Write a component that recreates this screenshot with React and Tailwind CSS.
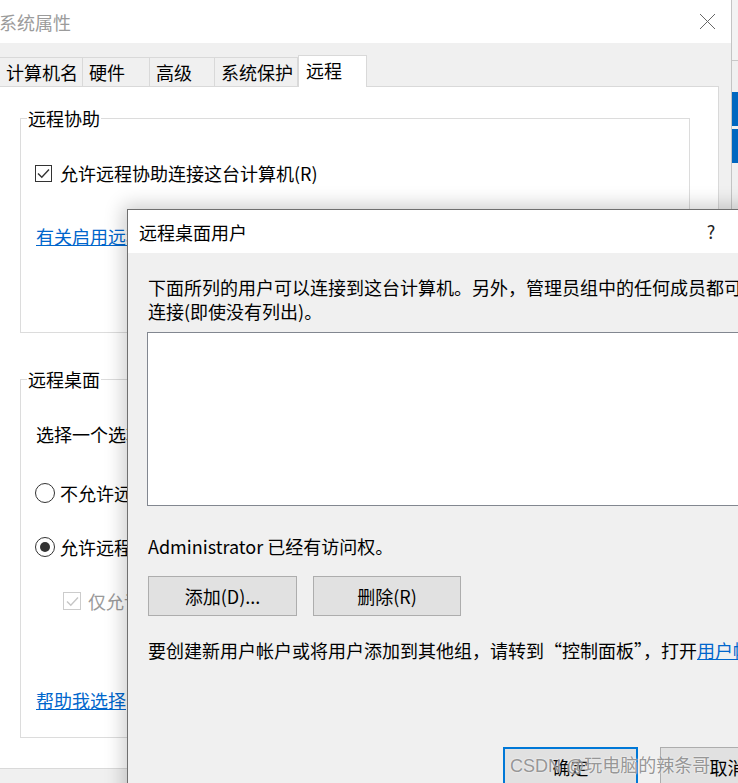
import React from "react";

const tabs = [
  { label: "计算机名", w: "w-[83px]" },
  { label: "硬件", w: "w-[67px]" },
  { label: "高级", w: "w-[65px]" },
  { label: "系统保护", w: "w-[83px]" },
];

const Check = ({ color = "#333" }) => (
  <svg width="13" height="11" viewBox="0 0 13 11" fill="none">
    <path d="M1 5.5 L4.8 9.3 L12 1.5" stroke={color} strokeWidth="1.4" />
  </svg>
);

const Checkbox = ({ disabled }) => (
  <div
    className={
      "flex items-center justify-center shrink-0 bg-white border " +
      (disabled ? "w-[18px] h-[18px] border-[#cccccc]" : "w-[17px] h-[17px] border-[#333333]")
    }
  >
    <Check color={disabled ? "#c6c6c6" : "#333"} />
  </div>
);

const Radio = ({ checked }) => (
  <div className="w-[20px] h-[20px] shrink-0 rounded-full border border-[#333333] bg-white flex items-center justify-center">
    {checked && <div className="w-[10px] h-[10px] rounded-full bg-[#333333]" />}
  </div>
);

const GroupBox = ({ title, className, children }) => (
  <div className={"ml-[20px] w-[670px] border border-[#dcdcdc] " + className}>
    <div className="w-fit -mt-[13px] ml-[6px] px-[1px] bg-white leading-[24px]">{title}</div>
    {children}
  </div>
);

const RemoteDesktopUsers = () => (
  <div className="absolute left-[127px] top-[209px] w-[654px] h-[600px] flex flex-col border border-[#6f6f6f] shadow-[0_0_18px_4px_rgba(0,0,0,0.2)]">
    <div className="h-[43px] shrink-0 bg-white flex items-center">
      <span className="pl-[11px] leading-[24px]">远程桌面用户</span>
      <span className="ml-auto w-[46px] text-center text-[#222]">?</span>
      <span className="w-[46px]" />
    </div>
    <div className="flex-1 bg-[#f0f0f0] pl-[20px] pt-[22px] leading-[24px]">
      <p className="whitespace-nowrap">下面所列的用户可以连接到这台计算机。另外，管理员组中的任何成员都可以</p>
      <p className="whitespace-nowrap">连接(即使没有列出)。</p>
      <div className="-ml-px mt-[9px] w-[620px] h-[174px] bg-white border border-[#828790]" />
      <p className="mt-[28px] whitespace-nowrap">Administrator 已经有访问权。</p>
      <div className="mt-[18px] flex gap-[16px]">
        <button className="w-[149px] h-[40px] bg-[#e1e1e1] border border-[#adadad]">添加(D)...</button>
        <button className="w-[148px] h-[40px] bg-[#e1e1e1] border border-[#adadad]">删除(R)</button>
      </div>
      <p className="mt-[22px] whitespace-nowrap">
        要创建新用户帐户或将用户添加到其他组，请转到“控制面板”，打开
        <span className="text-[#0066cc] underline">用户帐户</span>。
      </p>
      <div className="mt-[85px] ml-[355px] flex gap-[22px]">
        <button className="w-[135px] h-[40px] shrink-0 bg-[#e1e1e1] border-2 border-[#0078d7]">确定</button>
        <button className="w-[135px] h-[40px] shrink-0 bg-[#e1e1e1] border border-[#adadad]">取消</button>
      </div>
    </div>
  </div>
);

export default function App() {
  return (
    <div className="relative w-[738px] h-[783px] overflow-hidden bg-[#f0f0f0] text-[18px] text-black font-['Noto_Sans_CJK_SC','Microsoft_YaHei',sans-serif]">
      <div className="flex h-full">
        {/* 系统属性 */}
        <div className="w-[732px] shrink-0 flex flex-col border-r border-[#c4c4c4]">
          <div className="h-[43px] shrink-0 bg-white flex items-center justify-between pr-[15px]">
            <span className="-ml-[1px] text-[#9b9b9b] leading-[24px]">系统属性</span>
            <svg width="17" height="17" viewBox="0 0 17 17">
              <path d="M1 1 L16 16 M16 1 L1 16" stroke="#666" strokeWidth="1" />
            </svg>
          </div>
          <div className="flex-1 flex flex-col pt-[12px]">
            <div className="flex items-end h-[31px]">
              {tabs.map((t) => (
                <div
                  key={t.label}
                  className={t.w + " h-[29px] pl-[6px] flex items-center border-t border-r border-[#d9d9d9] leading-[24px]"}
                >
                  {t.label}
                </div>
              ))}
              <div className="relative z-10 w-[69px] h-[32px] -mb-px pl-[7px] pt-[2px] bg-white border-x border-t border-[#d9d9d9] leading-[24px]">
                远程
              </div>
            </div>
            <div className="w-[719px] h-[683px] bg-white border border-l-0 border-[#d9d9d9] pt-[31px]">
              <GroupBox title="远程协助" className="h-[215px]">
                <div className="mt-[31px] ml-[14px] flex items-center gap-[8px] h-[24px]">
                  <Checkbox />
                  <span className="leading-[24px] whitespace-nowrap">允许远程协助连接这台计算机(R)</span>
                </div>
                <p className="mt-[39px] ml-[15px] leading-[24px] text-[#0066cc] underline whitespace-nowrap">
                  有关启用远程协助的详细信息
                </p>
              </GroupBox>
              <GroupBox title="远程桌面" className="mt-[46px] h-[359px]">
                <p className="mt-[31px] ml-[15px] leading-[24px] whitespace-nowrap">选择一个选项，然后指定谁可以连接。</p>
                <div className="mt-[35px] ml-[14px] flex items-center gap-[5px] h-[24px]">
                  <Radio />
                  <span className="whitespace-nowrap">不允许远程连接到此计算机</span>
                </div>
                <div className="mt-[30px] ml-[14px] flex items-center gap-[5px] h-[24px]">
                  <Radio checked />
                  <span className="whitespace-nowrap">允许远程连接到此计算机</span>
                </div>
                <div className="mt-[30px] ml-[42px] flex items-center gap-[7px] h-[24px]">
                  <Checkbox disabled />
                  <span className="text-[#9a9a9a] whitespace-nowrap">仅允许运行使用网络级别身份验证的远程桌面的计算机连接</span>
                </div>
                <p className="mt-[75px] ml-[15px] leading-[24px] text-[#0066cc] underline whitespace-nowrap">帮助我选择</p>
              </GroupBox>
            </div>
          </div>
        </div>
        {/* window behind */}
        <div className="flex-1 flex flex-col bg-[#f0f0f0]">
          <div className="h-[61px] bg-[#f3f3f3] border-b border-[#c8c8c8]" />
          <div className="h-[31px]" />
          <div className="h-[34px] bg-[#0067c0]" />
          <div className="h-[3px]" />
          <div className="h-[34px] bg-[#0067c0]" />
        </div>
      </div>

      <RemoteDesktopUsers />

      <div className="absolute left-[510px] top-[754px] text-[18px] leading-[24px] text-[#8a8a8a]/90 whitespace-nowrap font-['Liberation_Sans','Noto_Sans_CJK_SC',sans-serif] [text-shadow:0_0_2px_#fff]">
        CSDN @玩电脑的辣条哥
      </div>
    </div>
  );
}
